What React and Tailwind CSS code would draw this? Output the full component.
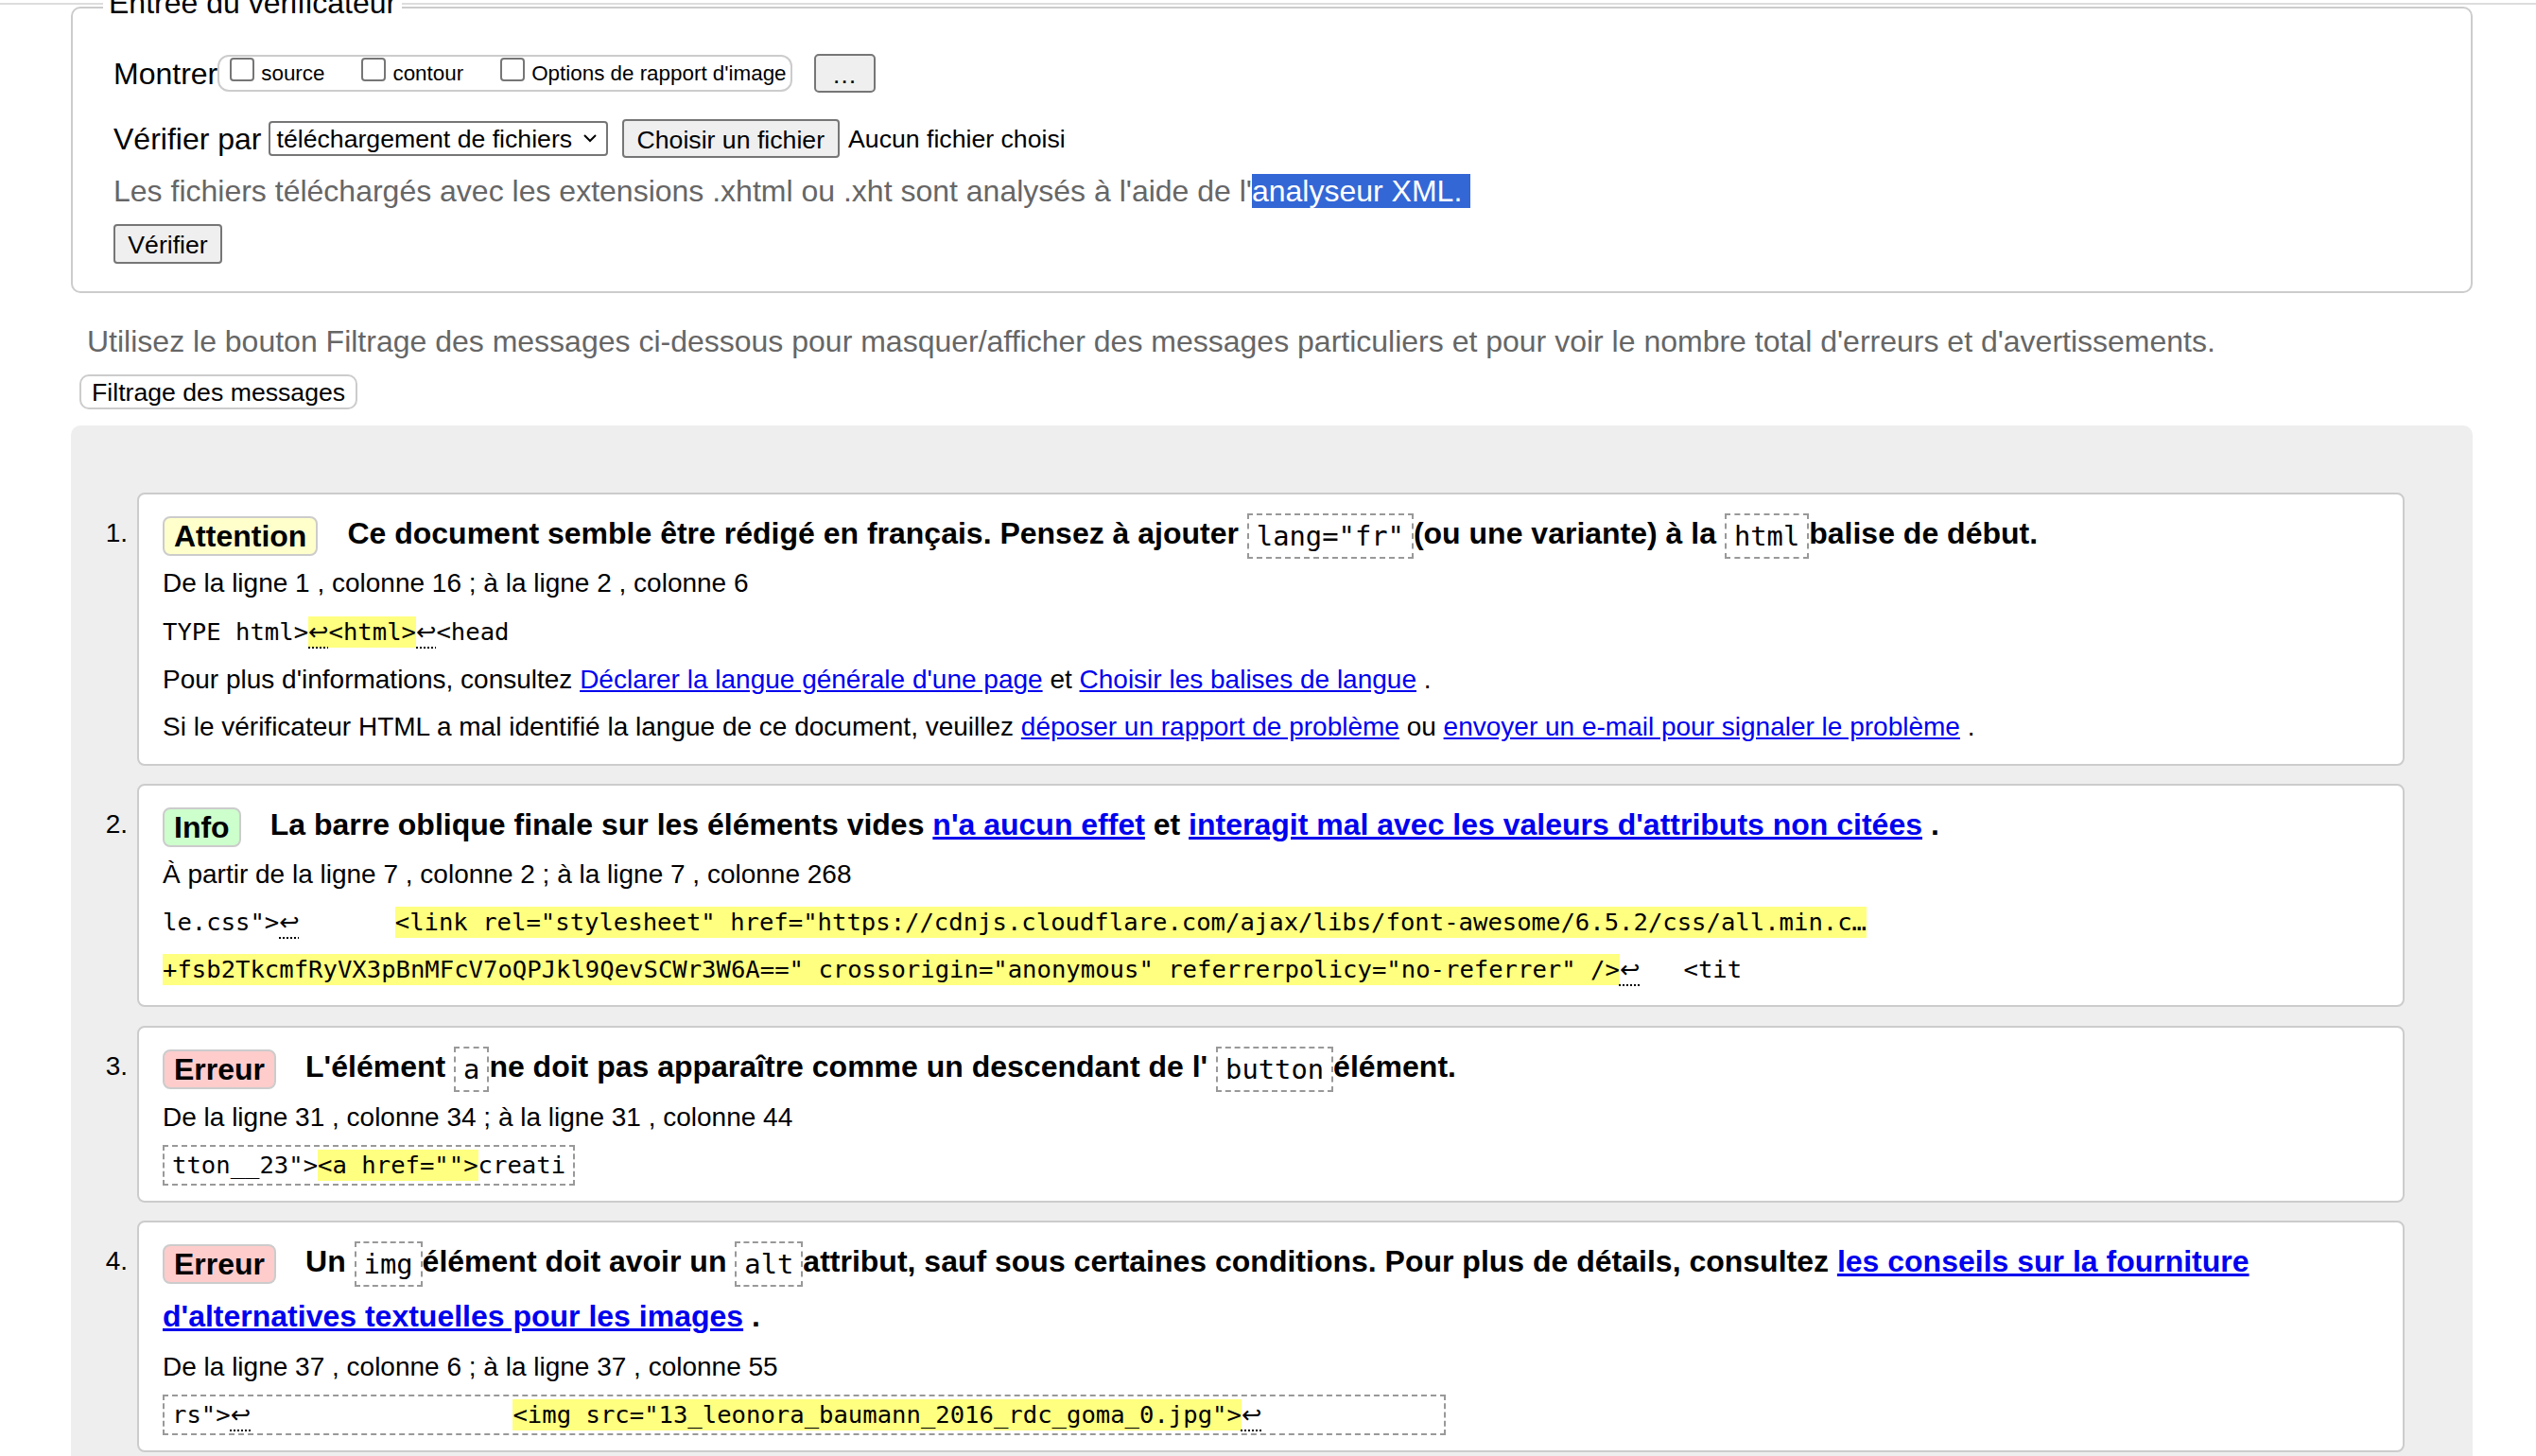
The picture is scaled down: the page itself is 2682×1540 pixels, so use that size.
import React from "react";

function Ret() {
  return (
    <span className="font-['DejaVu_Sans',sans-serif] underline decoration-dotted decoration-[2px] underline-offset-[7px]">
      ↩
    </span>
  );
}

function Hl({ children }) {
  return <span className="inline-block bg-[#ffff80] leading-[33px]">{children}</span>;
}

function Code({ children }) {
  return (
    <code className="inline-block align-middle border-2 border-dashed border-[#999] px-[8px] py-[5px] font-['DejaVu_Sans_Mono',monospace] text-[28.8px] leading-[34px] font-normal">
      {children}
    </code>
  );
}

function Badge({ tone, children }) {
  return (
    <span
      className={
        "mr-[31px] inline-block align-middle rounded-[8px] border-2 border-[#ccc] px-[10px] leading-[38px] " +
        tone
      }
    >
      {children}
    </span>
  );
}

function A({ children }) {
  return <a className="text-[#0000ee] underline">{children}</a>;
}

function Box({ children }) {
  return (
    <div className="inline-block border-2 border-dashed border-[#999] px-[8px] py-[3px] font-['DejaVu_Sans_Mono',monospace] text-[25.6px] leading-[33px] whitespace-pre">
      {children}
    </div>
  );
}

function Card({ n, pb, gap, children }) {
  return (
    <li className={"flex " + gap}>
      <div className="w-[70px] shrink-0 pr-[10px] pt-[14px] text-right text-[28px] leading-[58px]">
        {n}.
      </div>
      <div
        className={
          "flex-1 rounded-[8px] border-2 border-[#ccc] bg-white pl-[25px] pr-[20px] pt-[12px] text-[28px] " +
          pb
        }
      >
        {children}
      </div>
    </li>
  );
}

function Title({ children }) {
  return <div className="text-[32px] font-bold leading-[58px]">{children}</div>;
}

function Line({ mt, children }) {
  return <p className={"leading-[32px] " + mt}>{children}</p>;
}

function CodeLine({ mt, children }) {
  return (
    <div className={"font-['DejaVu_Sans_Mono',monospace] text-[25.6px] leading-[33px] whitespace-pre " + mt}>
      {children}
    </div>
  );
}

export default function App() {
  return (
    <div className="min-h-screen bg-white font-['Liberation_Sans',Arial,sans-serif] text-black">
      <div className="h-[3px]" />
      <div className="h-[2px] bg-[#ddd]" />

      <div className="pl-[75px] pr-[67px]">
        <fieldset className="-mt-[20px] rounded-[10px] border-2 border-[#ccc] pl-[32px] pr-[30px] pb-[29px]">
          <legend className="relative bg-white px-[6px] pb-[8px] text-[32px] leading-[37px]">
            Entrée du vérificateur
          </legend>

          <div className="pl-[11px]">
            <div className="mt-[27px] flex h-[41px] items-center">
              <span className="text-[32px]">Montrer</span>
              <div className="flex h-[39px] items-center rounded-[12px] border-2 border-[#ccc] pl-[3px] pr-[4px] text-[22.4px]">
                <label className="mr-[31px] flex items-center">
                  <span className="mb-[8px] ml-[8px] mr-[7px] h-[25px] w-[26px] shrink-0 rounded-[4px] border-2 border-[#767676] bg-white" />
                  source
                </label>
                <label className="mr-[31px] flex items-center">
                  <span className="mb-[8px] ml-[8px] mr-[7px] h-[25px] w-[26px] shrink-0 rounded-[4px] border-2 border-[#767676] bg-white" />
                  contour
                </label>
                <label className="flex items-center">
                  <span className="mb-[8px] ml-[8px] mr-[7px] h-[25px] w-[26px] shrink-0 rounded-[4px] border-2 border-[#767676] bg-white" />
                  Options de rapport d'image
                </label>
              </div>
              <button className="ml-[23px] h-[41px] w-[65px] rounded-[5px] border-2 border-[#767676] bg-[#efefef] text-[26.67px]">
                …
              </button>
            </div>

            <div className="mt-[28px] flex h-[41px] items-center">
              <span className="text-[32px]">Vérifier par</span>
              <div className="ml-[7px] flex h-[37px] w-[359px] items-center justify-between rounded-[4px] border-2 border-[#767676] bg-white pl-[7px] pr-[10px] text-[26.67px]">
                <span>téléchargement de fichiers</span>
                <svg width="14" height="9" viewBox="0 0 14 9">
                  <polyline points="1,1 7,7 13,1" fill="none" stroke="#000" strokeWidth="2" />
                </svg>
              </div>
              <button className="ml-[15px] h-[41px] rounded-[4px] border-2 border-[#767676] bg-[#efefef] px-[14px] text-[26.67px]">
                Choisir un fichier
              </button>
              <span className="ml-[9px] text-[26.67px]">Aucun fichier choisi</span>
            </div>

            <p className="mt-[17px] text-[32px] leading-[37px] text-[#666]">
              Les fichiers téléchargés avec les extensions .xhtml ou .xht sont analysés à l'aide de l'
              <span className="bg-[#3367d6] pr-[9px] text-white">analyseur XML.</span>
            </p>

            <button className="mt-[16px] block h-[42px] w-[115px] rounded-[4px] border-2 border-[#767676] bg-[#efefef] text-[26.67px]">
              Vérifier
            </button>
          </div>
        </fieldset>

        <p className="ml-[17px] mt-[33px] text-[32px] leading-[37px] text-[#666]">
          Utilisez le bouton Filtrage des messages ci-dessous pour masquer/afficher des messages particuliers et pour voir le nombre total d'erreurs et d'avertissements.
        </p>
        <button className="ml-[9px] mt-[16px] block h-[37px] rounded-[10px] border-2 border-[#ccc] bg-white px-[11px] text-[26.67px] leading-[30px]">
          Filtrage des messages
        </button>

        <div className="mt-[17px] rounded-t-[10px] bg-[#eee] pb-[60px] pr-[72px] pt-[71px]">
          <ol>
            <Card n="1" pb="pb-[23px]" gap="">
              <Title>
                <Badge tone="bg-[#ffffcc]">Attention</Badge>
                Ce document semble être rédigé en français. Pensez à ajouter{" "}
                <Code>lang="fr"</Code>(ou une variante) à la <Code>html</Code>balise de début.
              </Title>
              <Line mt="mt-[8px]">De la ligne 1 , colonne 16 ; à la ligne 2 , colonne 6</Line>
              <CodeLine mt="mt-[19px]">
                {"TYPE html>"}
                <Hl>
                  <Ret />
                  {"<html>"}
                </Hl>
                <Ret />
                {"<head"}
              </CodeLine>
              <Line mt="mt-[18px]">
                Pour plus d'informations, consultez <A>Déclarer la langue générale d'une page</A> et{" "}
                <A>Choisir les balises de langue</A> .
              </Line>
              <Line mt="mt-[18px]">
                Si le vérificateur HTML a mal identifié la langue de ce document, veuillez{" "}
                <A>déposer un rapport de problème</A> ou <A>envoyer un e-mail pour signaler le problème</A> .
              </Line>
            </Card>

            <Card n="2" pb="pb-[21px]" gap="mt-[19px]">
              <Title>
                <Badge tone="bg-[#ccffcc]">Info</Badge>
                La barre oblique finale sur les éléments vides <A>n'a aucun effet</A> et{" "}
                <A>interagit mal avec les valeurs d'attributs non citées</A> .
              </Title>
              <Line mt="mt-[8px]">À partir de la ligne 7 , colonne 2 ; à la ligne 7 , colonne 268</Line>
              <CodeLine mt="mt-[18px]">
                {'le.css">'}
                <Ret />
                <span className="inline-block w-[101px]" />
                <Hl>
                  {'<link rel="stylesheet" href="https://cdnjs.cloudflare.com/ajax/libs/font-awesome/6.5.2/css/all.min.c…'}
                </Hl>
              </CodeLine>
              <CodeLine mt="mt-[17px]">
                <Hl>
                  {'+fsb2TkcmfRyVX3pBnMFcV7oQPJkl9QevSCWr3W6A==" crossorigin="anonymous" referrerpolicy="no-referrer" />'}
                </Hl>
                <Ret />
                {"   <tit"}
              </CodeLine>
            </Card>

            <Card n="3" pb="pb-[16px]" gap="mt-[20px]">
              <Title>
                <Badge tone="bg-[#ffcccc]">Erreur</Badge>
                L'élément <Code>a</Code>ne doit pas apparaître comme un descendant de l'{" "}
                <Code>button</Code>élément.
              </Title>
              <Line mt="mt-[9px]">De la ligne 31 , colonne 34 ; à la ligne 31 , colonne 44</Line>
              <div className="mt-[13px]">
                <Box>
                  {'tton__23">'}
                  <Hl>{'<a href="">'}</Hl>
                  {"creati"}
                </Box>
              </div>
            </Card>

            <Card n="4" pb="pb-[16px]" gap="mt-[19px]">
              <Title>
                <Badge tone="bg-[#ffcccc]">Erreur</Badge>
                Un <Code>img</Code>élément doit avoir un <Code>alt</Code>attribut, sauf sous certaines
                conditions. Pour plus de détails, consultez{" "}
                <A>les conseils sur la fourniture d'alternatives textuelles pour les images</A> .
              </Title>
              <Line mt="mt-[9px]">De la ligne 37 , colonne 6 ; à la ligne 37 , colonne 55</Line>
              <div className="mt-[13px]">
                <Box>
                  {'rs">'}
                  <Ret />
                  {"                  "}
                  <Hl>{'<img src="13_leonora_baumann_2016_rdc_goma_0.jpg">'}</Hl>
                  <Ret />
                  {"            "}
                </Box>
              </div>
            </Card>
          </ol>
        </div>
      </div>
    </div>
  );
}
